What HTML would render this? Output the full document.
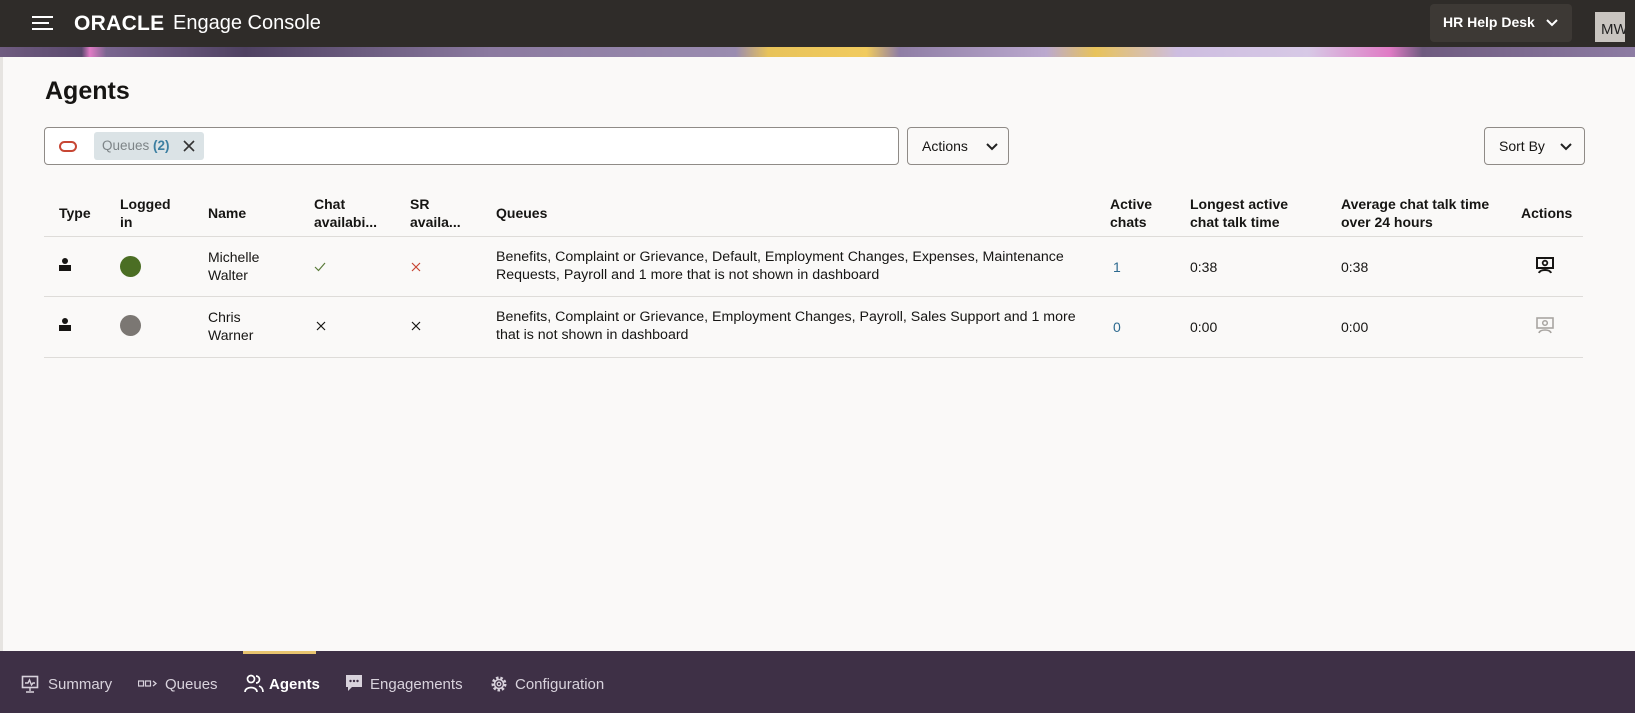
<!DOCTYPE html>
<html><head><meta charset="utf-8"><style>
*{box-sizing:border-box;margin:0;padding:0}
body{width:1635px;height:713px;overflow:hidden;background:#faf9f8;font-family:"Liberation Sans",sans-serif;color:#161513;position:relative}
.hdr{position:absolute;left:0;top:0;width:1635px;height:47px;background:#2f2c29}
.banner{position:absolute;left:0;top:47px;width:1635px;height:10px;background:linear-gradient(90deg,#6f5c80 0,#5b4a6e 5%,#e07bc5 5.5%,#7a6690 6.5%,#4f4262 15%,#8b7aa0 30%,#9a8cb0 45%,#e8c35a 47%,#f1cb5e 53%,#8f7ea5 55%,#bba9cf 64%,#e8c35a 67%,#cdbde0 72%,#d7c9e6 80%,#e07bc5 85%,#6f5c80 87%,#8d7ca3 100%)}
.a{position:absolute;white-space:nowrap}
.th{font-size:14px;font-weight:bold;line-height:18px;position:absolute;white-space:nowrap}
.td{font-size:14px;line-height:18px;position:absolute;white-space:nowrap}
.q{font-size:14.2px;line-height:18px;position:absolute;white-space:nowrap}
.line{position:absolute;left:44px;width:1539px;height:1px;background:#dedcd9}
.btn{position:absolute;border:1px solid #8f8b87;border-radius:4px;background:#faf9f8;font-size:14px;height:38px;top:127px}
.nav{position:absolute;left:0;top:651px;width:1635px;height:62px;background:#3e3046}
.ni{position:absolute;top:25px;color:#d8d2dc;font-size:15px}
</style></head><body>
<div class="hdr">
 <div class="a" style="left:32px;top:16px;width:21px;height:2px;background:#fff"></div>
 <div class="a" style="left:32px;top:22px;width:17px;height:2px;background:#fff"></div>
 <div class="a" style="left:32px;top:28px;width:21px;height:2px;background:#fff"></div>
 <div class="a" style="left:74px;top:12px;color:#fff;font-size:21px;font-weight:bold;letter-spacing:0.3px">ORACLE</div>
 <div class="a" style="left:173px;top:12px;color:#fff;font-size:20px">Engage Console</div>
 <div class="a" style="left:1430px;top:4px;width:142px;height:38px;background:#3d3935;border-radius:4px"></div>
 <div class="a" style="left:1443px;top:14px;color:#fff;font-size:14px;font-weight:bold">HR Help Desk</div>
 <svg class="a" style="left:1545px;top:18px" width="14" height="10"><path d="M2 2l5 5 5-5" stroke="#fff" stroke-width="2" fill="none"/></svg>
 <div class="a" style="left:1595px;top:12px;width:30px;height:30px;background:#c9c5c0;color:#222;font-size:15px;padding:9px 0 0 6px;overflow:hidden">MW</div>
</div>
<div class="banner"></div>
<div class="a" style="left:0;top:57px;width:3px;height:594px;background:#e6e4e1"></div>
<div class="a" style="left:45px;top:77px;font-size:25px;font-weight:bold">Agents</div>
<div class="a" style="left:44px;top:127px;width:855px;height:38px;background:#fff;border:1px solid #8f8b87;border-radius:4px"></div>
<div class="a" style="left:59px;top:141px;width:18px;height:11px;border:2px solid #c74634;border-radius:6px"></div>
<div class="a" style="left:94px;top:132px;width:110px;height:28px;background:#dbe3e6;border-radius:3px"></div>
<div class="a" style="left:102px;top:138px;font-size:13.5px;color:#7d8487">Queues <b style="color:#3c7fa1">(2)</b></div>
<svg class="a" style="left:182px;top:139px" width="14" height="14"><path d="M2 2l10 10M12 2L2 12" stroke="#333" stroke-width="1.6"/></svg>
<div class="btn" style="left:907px;width:102px"><span class="a" style="left:14px;top:10px">Actions</span><svg class="a" style="left:78px;top:14px" width="12" height="9"><path d="M1 2l5 5 5-5" stroke="#222" stroke-width="2" fill="none"/></svg></div>
<div class="btn" style="left:1484px;width:101px"><span class="a" style="left:14px;top:10px">Sort By</span><svg class="a" style="left:75px;top:14px" width="12" height="9"><path d="M1 2l5 5 5-5" stroke="#222" stroke-width="2" fill="none"/></svg></div>

<div class="th" style="left:59px;top:204px">Type</div>
<div class="th" style="left:120px;top:195px">Logged<br>in</div>
<div class="th" style="left:208px;top:204px">Name</div>
<div class="th" style="left:314px;top:195px">Chat<br>availabi...</div>
<div class="th" style="left:410px;top:195px">SR<br>availa...</div>
<div class="th" style="left:496px;top:204px">Queues</div>
<div class="th" style="left:1110px;top:195px">Active<br>chats</div>
<div class="th" style="left:1190px;top:195px">Longest active<br>chat talk time</div>
<div class="th" style="left:1341px;top:195px">Average chat talk time<br>over 24 hours</div>
<div class="th" style="left:1521px;top:204px">Actions</div>
<div class="line" style="top:236px"></div>

<svg class="a" style="left:59px;top:258px" width="12" height="13"><circle cx="6" cy="3" r="3" fill="#161513"/><rect x="0" y="7" width="12" height="6" fill="#161513"/></svg>
<div class="a" style="left:120px;top:256px;width:21px;height:21px;border-radius:50%;background:#4b6e24"></div>
<div class="td" style="left:208px;top:248px">Michelle<br>Walter</div>
<svg class="a" style="left:314px;top:262px" width="12" height="10"><path d="M1 5l3.5 3.5L11 1" stroke="#5a7b3a" stroke-width="1.2" fill="none"/></svg>
<svg class="a" style="left:411px;top:262px" width="10" height="10"><path d="M1 1l8 8M9 1L1 9" stroke="#c74634" stroke-width="1.2"/></svg>
<div class="q" style="left:496px;top:248px">Benefits, Complaint or Grievance, Default, Employment Changes, Expenses, Maintenance<br>Requests, Payroll and 1 more that is not shown in dashboard</div>
<div class="td" style="left:1113px;top:258px;color:#2d6a8f">1</div>
<div class="td" style="left:1190px;top:258px">0:38</div>
<div class="td" style="left:1341px;top:258px">0:38</div>
<svg class="a" style="left:1535px;top:256px" width="20" height="18"><rect x="2" y="2" width="16" height="10" fill="none" stroke="#161513" stroke-width="2"/><circle cx="10" cy="7" r="2.3" fill="none" stroke="#161513" stroke-width="1.8"/><path d="M4 17c1-4 11-4 12 0" stroke="#161513" stroke-width="2" fill="none"/></svg>
<div class="line" style="top:296px"></div>

<svg class="a" style="left:59px;top:318px" width="12" height="13"><circle cx="6" cy="3" r="3" fill="#161513"/><rect x="0" y="7" width="12" height="6" fill="#161513"/></svg>
<div class="a" style="left:120px;top:315px;width:21px;height:21px;border-radius:50%;background:#7b7773"></div>
<div class="td" style="left:208px;top:308px">Chris<br>Warner</div>
<svg class="a" style="left:316px;top:321px" width="10" height="10"><path d="M1 1l8 8M9 1L1 9" stroke="#161513" stroke-width="1.2"/></svg>
<svg class="a" style="left:411px;top:321px" width="10" height="10"><path d="M1 1l8 8M9 1L1 9" stroke="#161513" stroke-width="1.2"/></svg>
<div class="q" style="left:496px;top:308px">Benefits, Complaint or Grievance, Employment Changes, Payroll, Sales Support and 1 more<br>that is not shown in dashboard</div>
<div class="td" style="left:1113px;top:318px;color:#2d6a8f">0</div>
<div class="td" style="left:1190px;top:318px">0:00</div>
<div class="td" style="left:1341px;top:318px">0:00</div>
<svg class="a" style="left:1535px;top:316px" width="20" height="18"><rect x="2" y="2" width="16" height="10" fill="none" stroke="#a9a6a2" stroke-width="1.6"/><circle cx="10" cy="7" r="2.3" fill="none" stroke="#a9a6a2" stroke-width="1.5"/><path d="M4 17c1-4 11-4 12 0" stroke="#a9a6a2" stroke-width="1.6" fill="none"/></svg>
<div class="line" style="top:357px"></div>

<div class="nav">
 <div class="a" style="left:243px;top:0;width:73px;height:3px;background:#e8c46f"></div>
 <svg class="a" style="left:21px;top:24px" width="18" height="18"><rect x="1.5" y="1.5" width="15" height="11" fill="none" stroke="#d8d2dc" stroke-width="1.6"/><path d="M4 8h3l1.5-3 2 5 1.5-2h2M9 13v3M5 17h8" stroke="#d8d2dc" stroke-width="1.4" fill="none"/></svg>
 <div class="ni" style="left:48px">Summary</div>
 <svg class="a" style="left:138px;top:29px" width="20" height="8"><rect x="0.5" y="1" width="5" height="5" fill="none" stroke="#d8d2dc" stroke-width="1.2"/><rect x="7.5" y="1" width="5" height="5" fill="none" stroke="#d8d2dc" stroke-width="1.2"/><path d="M15 1l3 2.5-3 2.5" stroke="#d8d2dc" stroke-width="1.3" fill="none"/></svg>
 <div class="ni" style="left:165px">Queues</div>
 <svg class="a" style="left:244px;top:23px" width="20" height="20"><circle cx="7" cy="5" r="3.5" fill="none" stroke="#fff" stroke-width="1.7"/><path d="M1 18c0-6 12-6 12 0M12 2a3.5 3.5 0 0 1 0 7M15 12c3 1 4 3 4 6" stroke="#fff" stroke-width="1.7" fill="none"/></svg>
 <div class="ni" style="left:269px;color:#fff;font-weight:bold">Agents</div>
 <svg class="a" style="left:345px;top:23px" width="18" height="19"><path d="M1 1h16v12H7l-4 4v-4H1z" fill="#d8d2dc"/><circle cx="5.5" cy="7" r="1.2" fill="#3e3046"/><circle cx="9" cy="7" r="1.2" fill="#3e3046"/><circle cx="12.5" cy="7" r="1.2" fill="#3e3046"/></svg>
 <div class="ni" style="left:370px">Engagements</div>
 <svg class="a" style="left:490px;top:24px" width="18" height="18"><circle cx="9" cy="9" r="6" fill="none" stroke="#d8d2dc" stroke-width="3" stroke-dasharray="2.4 1.8"/><circle cx="9" cy="9" r="4.5" fill="none" stroke="#d8d2dc" stroke-width="1.5"/><circle cx="9" cy="9" r="1.8" fill="none" stroke="#d8d2dc" stroke-width="1.3"/></svg>
 <div class="ni" style="left:515px">Configuration</div>
</div>
</body></html>
